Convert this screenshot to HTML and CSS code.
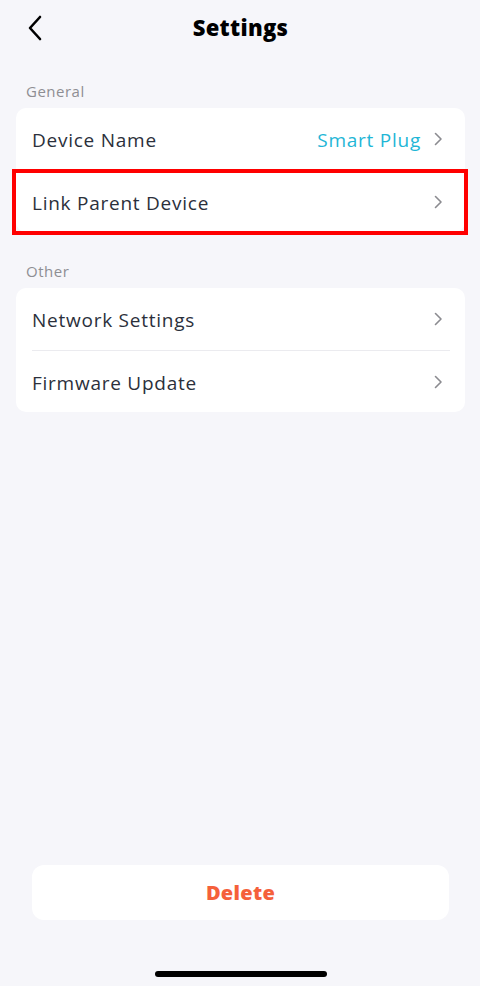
FILE: index.html
```html
<!DOCTYPE html>
<html>
<head>
    <title>Settings</title>
    <link rel="stylesheet" href="styles.css">
</head>
<body>

<div class="screen">
    <!-- Header -->
    <div class="header">
        <span class="back">
            <svg width="16" height="26" viewBox="0 0 16 26"><path d="M13 2 L3 13 L13 24" fill="none" stroke="#000" stroke-width="2.6" stroke-linecap="round" stroke-linejoin="round"/></svg>
        </span>
        <h1>Settings</h1>
    </div>

    <!-- General -->
    <div class="group-label">General</div>
    <div class="card">
        <div class="row">
            <span class="row-title">Device Name</span>
            <span class="row-value">Smart Plug</span>
            <svg class="chev" width="9" height="14" viewBox="0 0 9 14"><path d="M1.5 1.5 L7 7 L1.5 12.5" fill="none" stroke="#8b8b90" stroke-width="1.6" stroke-linecap="round" stroke-linejoin="round"/></svg>
        </div>
        <div class="row marked">
            <span class="row-title">Link Parent Device</span>
            <svg class="chev" width="9" height="14" viewBox="0 0 9 14"><path d="M1.5 1.5 L7 7 L1.5 12.5" fill="none" stroke="#8b8b90" stroke-width="1.6" stroke-linecap="round" stroke-linejoin="round"/></svg>
        </div>
    </div>

    <!-- Other -->
    <div class="group-label">Other</div>
    <div class="card">
        <div class="row">
            <span class="row-title">Network Settings</span>
            <svg class="chev" width="9" height="14" viewBox="0 0 9 14"><path d="M1.5 1.5 L7 7 L1.5 12.5" fill="none" stroke="#8b8b90" stroke-width="1.6" stroke-linecap="round" stroke-linejoin="round"/></svg>
        </div>
        <div class="row">
            <span class="row-title">Firmware Update</span>
            <svg class="chev" width="9" height="14" viewBox="0 0 9 14"><path d="M1.5 1.5 L7 7 L1.5 12.5" fill="none" stroke="#8b8b90" stroke-width="1.6" stroke-linecap="round" stroke-linejoin="round"/></svg>
        </div>
    </div>

    <!-- Bottom -->
    <div class="footer">
        <button class="delete-btn">Delete</button>
        <div class="home-bar"></div>
    </div>
</div>

</body>
</html>
```

FILE: styles.css
```css
html, body {
    margin: 0;
    padding: 0;
}
body {
    font-family: "Open Sans", Lato, sans-serif;
    background-color: #f6f6fa;
    color: #2b303b;
}
.screen {
    height: 986px;
    display: flex;
    flex-direction: column;
    padding: 0 15px 0 16px;
    box-sizing: border-box;
}
.header {
    position: relative;
    height: 54px;
    display: flex;
    align-items: center;
    justify-content: center;
}
.header h1 {
    margin: 0;
    font-size: 22px;
    font-weight: 800;
    color: #000;
    letter-spacing: 0.3px;
}
.back {
    position: absolute;
    left: 11px;
    top: 15px;
    display: flex;
}
.group-label {
    font-size: 15px;
    color: #8e8e93;
    padding: 26px 0 0 10px;
    height: 28px;
    line-height: 22px;
    letter-spacing: 0.5px;
}
.group-label + .card + .group-label {
    padding-top: 28px;
}
.card {
    background-color: #fff;
    border-radius: 10px;
    padding: 0 15px 0 16px;
}
.row {
    position: relative;
    height: 62px;
    box-sizing: border-box;
    padding-top: 2px;
    display: flex;
    align-items: center;
    font-size: 19px;
    letter-spacing: 0.75px;
}
.row + .row {
    border-top: 1px solid #ebebef;
}
.row-title {
    flex: 1;
}
.row-value {
    color: #1fb6d6;
    margin-right: 13px;
}
.chev {
    margin-right: 7px;
    margin-top: -2px;
}
.marked::after {
    content: "";
    position: absolute;
    top: -2px;
    bottom: -3px;
    left: -20px;
    right: -18px;
    border: 4px solid #ff0000;
}
.footer {
    margin-top: auto;
    display: flex;
    flex-direction: column;
    align-items: center;
    padding-bottom: 9px;
}
.delete-btn {
    width: 417px;
    height: 55px;
    border: none;
    border-radius: 12px;
    background-color: #fff;
    color: #f5603a;
    font-family: "Open Sans", sans-serif;
    font-size: 20px;
    font-weight: 800;
    letter-spacing: 0.3px;
    margin-bottom: 51px;
}
.home-bar {
    width: 172px;
    height: 6px;
    border-radius: 3px;
    background-color: #000;
}
```
